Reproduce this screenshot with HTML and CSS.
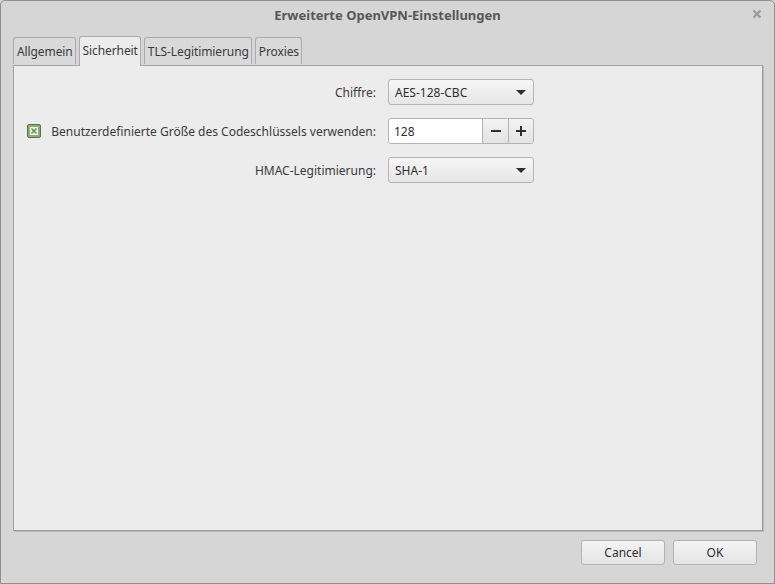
FILE: index.html
```html
<!DOCTYPE html>
<html lang="de">
<head>
<meta charset="utf-8">
<title>Erweiterte OpenVPN-Einstellungen</title>
<link rel="stylesheet" href="styles.css">
</head>
<body>
<div class="window">
  <div class="titlebar">
    <span class="title">Erweiterte OpenVPN-Einstellungen</span>
    <span class="close">
      <svg width="10" height="10" viewBox="0 0 10 10"><path d="M1.5 1.5 L8.5 8.5 M8.5 1.5 L1.5 8.5" stroke="#9a9a9a" stroke-width="2.2" stroke-linecap="butt"/></svg>
    </span>
  </div>
  <div class="notebook">
    <div class="tabs">
      <div class="tab">Allgemein</div>
      <div class="tab active">Sicherheit</div>
      <div class="tab">TLS-Legitimierung</div>
      <div class="tab">Proxies</div>
    </div>
    <div class="page">
      <div class="form">
        <div class="label">Chiffre:</div>
        <div class="combo"><span>AES-128-CBC</span><span class="arrow"></span></div>

        <div class="label check-label">
          <span class="checkbox">
            <svg width="8" height="8" viewBox="0 0 8 8"><path d="M1.5 1.5 L6.5 6.5 M6.5 1.5 L1.5 6.5" stroke="#6f8f55" stroke-width="1.6"/></svg>
          </span>
          <span>Benutzerdefinierte Größe des Codeschlüssels verwenden:</span>
        </div>
        <div class="spin">
          <span class="entry">128</span>
          <span class="spinbtn">
            <svg width="12" height="12" viewBox="0 0 12 12"><path d="M1 6 H11" stroke="#2e2e2e" stroke-width="2"/></svg>
          </span>
          <span class="spinbtn">
            <svg width="12" height="12" viewBox="0 0 12 12"><path d="M1 6 H11 M6 1 V11" stroke="#2e2e2e" stroke-width="2"/></svg>
          </span>
        </div>

        <div class="label">HMAC-Legitimierung:</div>
        <div class="combo"><span>SHA-1</span><span class="arrow"></span></div>
      </div>
    </div>
  </div>
  <div class="buttons">
    <button class="btn">Cancel</button>
    <button class="btn">OK</button>
  </div>
</div>
</body>
</html>
```
FILE: styles.css
```css
* { box-sizing: border-box; }
html, body { margin: 0; padding: 0; }
body {
  width: 775px;
  height: 584px;
  font-family: "Noto Sans", "DejaVu Sans", sans-serif;
  font-size: 12px;
  color: #3c3c3c;
  background: #d6d6d6;
}
.window {
  width: 775px;
  height: 584px;
  background: #d6d6d6;
  border: 1px solid #8f8f8f;
  border-radius: 5px 5px 0 0;
  display: flex;
  flex-direction: column;
}
.titlebar {
  height: 30px;
  display: flex;
  align-items: center;
  justify-content: center;
  position: relative;
  padding-bottom: 2px;
}
.title {
  font-weight: bold;
  font-size: 13px;
  color: #575757;
}
.close {
  position: absolute;
  right: 12px;
  top: 8px;
  width: 10px;
  height: 10px;
  display: flex;
}
.notebook {
  margin: 5px 11px 0 12px;
  display: flex;
  flex-direction: column;
  height: 495px;
}
.tabs {
  display: flex;
  align-items: flex-end;
  gap: 3px;
  height: 29px;
  position: relative;
  z-index: 1;
}
.tab {
  height: 27px;
  padding: 0 2px 0 3px;
  display: flex;
  align-items: center;
  border: 1px solid #ababab;
  border-bottom: none;
  border-radius: 3px 3px 0 0;
  background: #d9d9d9;
  color: #3a3a3a;
  margin-bottom: 1px;
  letter-spacing: -0.1px;
}
.tab.active {
  height: 30px;
  margin-bottom: -1px;
  background: #ececec;
  padding-bottom: 3px;
}
.page {
  flex: 1;
  background: #ececec;
  border: 1px solid #a4a4a4;
  border-right-color: #9a9a9a;
  border-bottom-color: #9a9a9a;
  box-shadow: 1px 1px 0 #b8b8b8;
  padding: 13px 0 0 13px;
}
.form {
  display: grid;
  grid-template-columns: 349px 146px;
  column-gap: 12px;
  row-gap: 13px;
  align-items: center;
}
.label {
  text-align: right;
  color: #3a3a3a;
}
.check-label {
  display: flex;
  align-items: center;
  justify-content: space-between;
}
.checkbox {
  width: 14px;
  height: 14px;
  border: 1px solid #5d6d52;
  border-radius: 2px;
  background: #8fae74;
  display: flex;
  align-items: center;
  justify-content: center;
}
.checkbox svg {
  background: #eef3ea;
  width: 8px;
  height: 8px;
}
.combo {
  height: 26px;
  border: 1px solid #b3b3b3;
  border-radius: 3px;
  background: linear-gradient(#f6f6f6, #e6e6e6);
  display: flex;
  align-items: center;
  justify-content: space-between;
  padding: 0 7px 0 6px;
  color: #2e2e2e;
}
.arrow {
  width: 0;
  height: 0;
  border-left: 5px solid transparent;
  border-right: 5px solid transparent;
  border-top: 5px solid #2e2e2e;
}
.spin {
  height: 26px;
  display: flex;
  border: 1px solid #b3b3b3;
  border-radius: 3px;
  overflow: hidden;
}
.entry {
  flex: 1;
  background: #ffffff;
  display: flex;
  align-items: center;
  padding-left: 5px;
  color: #2e2e2e;
}
.spinbtn {
  width: 26px;
  display: flex;
  align-items: center;
  justify-content: center;
  border-left: 1px solid #b3b3b3;
  background: linear-gradient(#f3f3f3, #e3e3e3);
}
.spinbtn + .spinbtn { width: 25px; }
.buttons {
  display: flex;
  justify-content: flex-end;
  gap: 8px;
  padding: 9px 17px 0 0;
}
.btn {
  width: 84px;
  height: 25px;
  font-family: inherit;
  font-size: 12px;
  color: #2e2e2e;
  border: 1px solid #b3b3b3;
  border-radius: 3px;
  background: linear-gradient(#f4f4f4, #e4e4e4);
  padding: 0;
}
```
